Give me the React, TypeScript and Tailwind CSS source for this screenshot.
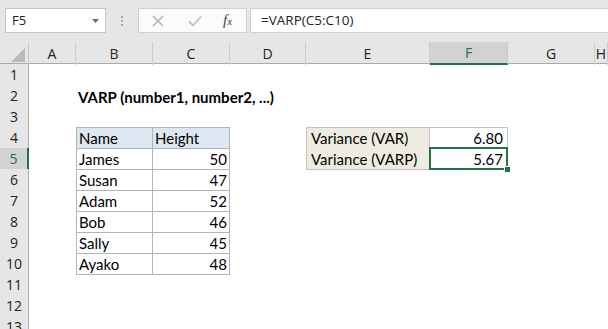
import type { ReactNode } from 'react';

const GREEN = '#217346';

const COLUMNS = ['A', 'B', 'C', 'D', 'E', 'F', 'G', 'H'];

type CellDef = {
  text?: ReactNode;
  className?: string;
  selected?: boolean;
};

// rows 1..13, each gives cells for columns A..H
const ROWS: Record<number, Partial<Record<string, CellDef>>> = {
  2: {
    B: { text: 'VARP (number1, number2, ...)', className: 'font-bold text-[15.5px] pl-[2px] whitespace-nowrap overflow-visible z-10' },
  },
  4: {
    B: { text: 'Name', className: 'bg-[#dde7f2] border-l border-t border-r border-b border-[#b4b4b4] pl-[2px]' },
    C: { text: 'Height', className: 'bg-[#dde7f2] border-t border-r border-b border-[#b4b4b4] pl-[2px]' },
    E: { text: 'Variance (VAR)', className: 'bg-[#eeece1] border-l border-t border-r border-b border-[#c4c4c4] pl-[4px]' },
    F: { text: '6.80', className: 'justify-end border-t border-r border-b border-[#c4c4c4] pr-[4px]' },
  },
  5: {
    E: { text: 'Variance (VARP)', className: 'bg-[#eeece1] border-l border-r border-b border-[#c4c4c4] pl-[4px]' },
    F: { text: '5.67', className: 'justify-end border-r border-b border-[#c4c4c4] pr-[4px]', selected: true },
  },
};

const PEOPLE: [string, number][] = [
  ['James', 50],
  ['Susan', 47],
  ['Adam', 52],
  ['Bob', 46],
  ['Sally', 45],
  ['Ayako', 48],
];

PEOPLE.forEach(([name, height], i) => {
  const row = 5 + i;
  ROWS[row] = {
    ...(ROWS[row] ?? {}),
    B: { text: name, className: 'border-l border-r border-b border-[#b4b4b4] pl-[2px]' },
    C: { text: String(height), className: 'justify-end border-r border-b border-[#b4b4b4] pr-[2px]' },
  };
});

function FormulaBar() {
  return (
    <div className="h-[42px] bg-[#e6e6e6] flex items-start pt-[8px] font-['Open_Sans',sans-serif] text-[13px] text-[#222]">
      <div className="ml-[5px] w-[101px] h-[25px] bg-white border border-[#c6c6c6] flex items-center pl-[6px] pr-[6px]">
        <span className="flex-1">F5</span>
        <svg width="7" height="4" viewBox="0 0 7 4">
          <path d="M0 0 L7 0 L3.5 4 Z" fill="#6d6d6d" />
        </svg>
      </div>
      <div className="w-[32px] h-[25px] flex flex-col items-center justify-center gap-[2px]">
        <span className="w-[2px] h-[2px] bg-[#a8a8a8]" />
        <span className="w-[2px] h-[2px] bg-[#a8a8a8]" />
        <span className="w-[2px] h-[2px] bg-[#a8a8a8]" />
      </div>
      <div className="w-[109px] h-[25px] bg-[#fbfbfb] border border-[#d0d0d0] flex items-center">
        <svg width="12" height="12" viewBox="0 0 12 12" className="ml-[13px]">
          <path d="M1 1 L11 11 M11 1 L1 11" stroke="#b3b3b3" strokeWidth="1.6" />
        </svg>
        <svg width="14" height="12" viewBox="0 0 14 12" className="ml-[24px]">
          <path d="M1 6.5 L5 10.5 L13 1.5" stroke="#c2c2c2" strokeWidth="1.8" fill="none" />
        </svg>
        <span className="ml-[21px] font-['Liberation_Serif',serif] italic text-[15px] text-[#444] leading-none">
          f<span className="text-[11px]">x</span>
        </span>
      </div>
      <div className="ml-[3px] flex-1 h-[25px] bg-white border border-[#d0d0d0] border-r-0 flex items-center pl-[10px] text-[13.5px]">
        =VARP(C5:C10)
      </div>
    </div>
  );
}

export default function App() {
  const gridCols = 'grid grid-cols-[29px_47px_77px_77px_76px_124px_78px_87px_1fr]';

  return (
    <div className="w-[608px] h-[329px] overflow-hidden bg-white">
      <FormulaBar />

      {/* column headers */}
      <div className={`${gridCols} h-[22px] bg-[#e6e6e6] border-b border-[#ababab] font-['Open_Sans',sans-serif] text-[14px] text-[#222]`}>
        <div className="relative border-r border-[#c8c8c8]">
          <svg width="14" height="14" viewBox="0 0 14 14" className="absolute right-[3px] bottom-[3px]">
            <path d="M14 0 L14 14 L0 14 Z" fill="#b9b9b9" />
          </svg>
        </div>
        {COLUMNS.map((c) =>
          c === 'F' ? (
            <div key={c} className="flex items-center justify-center bg-[#d2d2d2] border-r border-[#c8c8c8] border-b-2 border-b-[#217346] text-[#217346]">
              {c}
            </div>
          ) : (
            <div key={c} className="flex items-center justify-center border-r border-[#cdcdcd]">
              {c}
            </div>
          ),
        )}
      </div>

      {/* rows */}
      {Array.from({ length: 13 }, (_, i) => i + 1).map((r) => {
        const cells = ROWS[r] ?? {};
        const rowSelected = r === 5;
        return (
          <div key={r} className={`${gridCols} h-[21px]`}>
            <div
              className={`flex items-center justify-center font-['Open_Sans',sans-serif] text-[14px] border-b border-[#d6d6d6] ${
                rowSelected
                  ? 'bg-[#d2d2d2] text-[#217346] border-r-2 border-r-[#217346]'
                  : 'bg-[#e6e6e6] text-[#222] border-r border-r-[#ababab]'
              }`}
            >
              {r}
            </div>
            {COLUMNS.map((c) => {
              const cell = cells[c];
              return (
                <div
                  key={c}
                  className={`relative flex items-end pb-[1px] font-['Lato',sans-serif] text-[15px] leading-[18px] text-black ${cell?.className ?? ''}`}
                >
                  {cell?.text}
                  {cell?.selected && (
                    <>
                      <div className="absolute -left-px -top-px -right-px -bottom-px border-2" style={{ borderColor: GREEN }} />
                      <div className="absolute -right-[4px] -bottom-[4px] w-[7px] h-[7px] border border-white" style={{ backgroundColor: GREEN }} />
                    </>
                  )}
                </div>
              );
            })}
          </div>
        );
      })}
    </div>
  );
}
